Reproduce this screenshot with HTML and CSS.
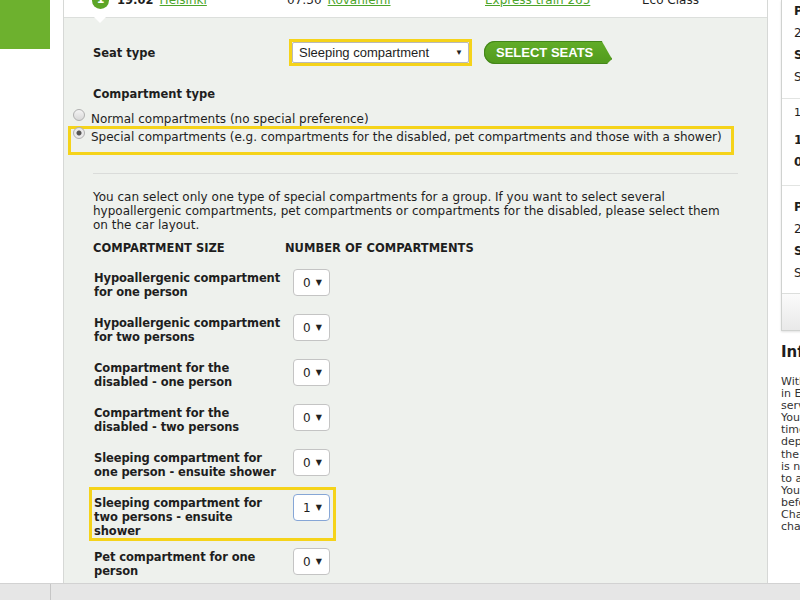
FILE: index.html
```html
<!DOCTYPE html>
<html lang="en">
<head>
    <meta charset="UTF-8">
    <meta name="viewport" content="width=device-width, initial-scale=1.0">
    <title>Seat selection</title>
    <link rel="stylesheet" href="styles.css">
</head>
<body>
<div class="page">
    <div class="content">

        <!-- left strip -->
        <aside class="side-left">
            <div class="brand-block"></div>
        </aside>

        <!-- journey + seat selection -->
        <main class="journey">
            <div class="leg">
                <div class="leg-cell"><span class="leg-num">1</span><b>19:02</b> <a href="#">Helsinki</a></div>
                <div class="leg-cell">07:30 <a href="#">Rovaniemi</a></div>
                <div class="leg-cell"><a href="#">Express train 265</a></div>
                <div class="leg-cell">Eco Class</div>
            </div>

            <div class="seat-panel">
                <div class="seat-row">
                    <div class="seat-label">Seat type</div>
                    <div class="highlight">
                        <div class="select select-wide"><span>Sleeping compartment</span><span class="arrow">&#9660;</span></div>
                    </div>
                    <button class="btn-select">SELECT SEATS</button>
                </div>

                <h3 class="section-title">Compartment type</h3>
                <div class="options">
                    <div class="option"><span class="radio"></span>Normal compartments (no special preference)</div>
                    <div class="option option-selected"><span class="radio radio-checked"></span>Special compartments (e.g. compartments for the disabled, pet compartments and those with a shower)</div>
                </div>

                <div class="divider"></div>

                <p class="note">You can select only one type of special compartments for a group. If you want to select several hypoallergenic compartments, pet compartments or compartments for the disabled, please select them on the car layout.</p>

                <div class="size-head">
                    <span class="size-col">COMPARTMENT SIZE</span>
                    <span>NUMBER OF COMPARTMENTS</span>
                </div>

                <div class="size-list">
                    <div class="size-row">
                        <div class="size-label">Hypoallergenic compartment for one person</div>
                        <div class="select select-num"><span>0</span><span class="arrow">&#9660;</span></div>
                    </div>
                    <div class="size-row">
                        <div class="size-label">Hypoallergenic compartment for two persons</div>
                        <div class="select select-num"><span>0</span><span class="arrow">&#9660;</span></div>
                    </div>
                    <div class="size-row">
                        <div class="size-label">Compartment for the disabled - one person</div>
                        <div class="select select-num"><span>0</span><span class="arrow">&#9660;</span></div>
                    </div>
                    <div class="size-row">
                        <div class="size-label">Compartment for the disabled - two persons</div>
                        <div class="select select-num"><span>0</span><span class="arrow">&#9660;</span></div>
                    </div>
                    <div class="size-row">
                        <div class="size-label">Sleeping compartment for one person - ensuite shower</div>
                        <div class="select select-num"><span>0</span><span class="arrow">&#9660;</span></div>
                    </div>
                    <div class="size-row size-row-active">
                        <div class="size-label">Sleeping compartment for two persons - ensuite shower</div>
                        <div class="select select-num select-focus"><span>1</span><span class="arrow">&#9660;</span></div>
                    </div>
                    <div class="size-row">
                        <div class="size-label">Pet compartment for one person</div>
                        <div class="select select-num"><span>0</span><span class="arrow">&#9660;</span></div>
                    </div>
                </div>
            </div>
        </main>

        <!-- summary column -->
        <aside class="summary">
            <div class="summary-box">
                <div class="summary-section">
                    <div class="s-line s-bold">Passengers</div>
                    <div class="s-line">2 adults</div>
                    <div class="s-line s-bold">Seat type</div>
                    <div class="s-line">Sleeping compartment</div>
                </div>
                <div class="summary-section summary-trip">
                    <div class="s-date">17.10.2014</div>
                    <div class="s-line s-bold">19:02 Helsinki</div>
                    <div class="s-line s-bold">07:30 Rovaniemi</div>
                </div>
                <div class="summary-section summary-last">
                    <div class="s-line s-bold">Passengers</div>
                    <div class="s-line">2 adults</div>
                    <div class="s-line s-bold">Seat type</div>
                    <div class="s-line">Sleeping compartment</div>
                </div>
                <div class="summary-foot"></div>
            </div>

            <h3 class="info-title">Information on tickets</h3>
            <p class="info-text">
                With a Saver ticket you can travel<br>
                in Economy class on all long-distance<br>
                services at a reduced price.<br>
                You can change the departure<br>
                time of your ticket until the<br>
                departure of the train, but<br>
                the price of the new ticket<br>
                is not refunded if it is lower<br>
                to a cheaper one.<br>
                You can cancel the ticket<br>
                before the departure.<br>
                Changes and cancellations are<br>
                charged a service fee.
            </p>
            <h3 class="info-title info-next">For groups</h3>
        </aside>
    </div>

    <div class="statusbar">
        <div class="status-tab"></div>
    </div>
</div>
</body>
</html>
```

FILE: styles.css
```css
* {
    box-sizing: border-box;
}
html, body {
    margin: 0;
    padding: 0;
    height: 100%;
    overflow: hidden;
}
body {
    font-family: "DejaVu Sans", Verdana, sans-serif;
    font-size: 12px;
    line-height: 14px;
    color: #1e1e1e;
    background: #fff;
}
a {
    color: #4ca52b;
}
b {
    font-size: 11.5px;
}
.page {
    display: flex;
    flex-direction: column;
    height: 600px;
}
.content {
    flex: 1;
    display: flex;
    overflow: hidden;
}

/* left strip */
.side-left {
    width: 63px;
    flex-shrink: 0;
}
.brand-block {
    width: 50px;
    height: 49px;
    background: #6db12e;
}

/* journey */
.journey {
    width: 705px;
    flex-shrink: 0;
    display: flex;
    flex-direction: column;
    border-left: 1px solid #d6d8d6;
    border-right: 1px solid #d6d8d6;
}
.leg {
    position: relative;
    flex-shrink: 0;
    margin-top: -17px;
    height: 35px;
    padding-left: 28px;
    display: grid;
    grid-template-columns: 195px 198px 157px auto;
    align-items: center;
    background: #fff;
    border-bottom: 1px solid #dcdfdc;
}
.leg::after {
    content: "";
    position: absolute;
    left: 30px;
    top: 100%;
    border-left: 6px solid transparent;
    border-right: 6px solid transparent;
    border-top: 6px solid #fff;
}
.leg-cell {
    display: flex;
    align-items: center;
    gap: 6px;
}
.leg-num {
    width: 17px;
    height: 17px;
    border-radius: 50%;
    background: #5ca526;
    color: #fff;
    font-weight: bold;
    font-size: 11px;
    display: flex;
    align-items: center;
    justify-content: center;
    margin-right: 2px;
}

/* seat panel */
.seat-panel {
    flex: 1;
    background: #eef1ed;
    padding: 21px 28px 0 29px;
}
.seat-row {
    display: flex;
    align-items: center;
}
.seat-label {
    width: 196px;
    font-weight: bold;
    font-size: 11.5px;
}
.highlight {
    border: 3px solid #f5d31a;
}
.select {
    background: #fff;
    border: 1px solid #b9b9b9;
    display: flex;
    align-items: center;
    justify-content: space-between;
}
.select .arrow {
    font-size: 8px;
    color: #222;
}
.select-wide {
    width: 177px;
    height: 21px;
    padding: 0 5px 0 6px;
    border-radius: 2px;
    font-family: "Liberation Sans", Arial, sans-serif;
    font-size: 13px;
}
.btn-select {
    margin-left: 12px;
    width: 128px;
    height: 23px;
    border: none;
    border-radius: 11px 0 0 11px;
    background: linear-gradient(#62ad28, #519a1d);
    box-shadow: inset 0 0 0 1px #44861a;
    color: #fff;
    font-family: "Liberation Sans", Arial, sans-serif;
    font-weight: bold;
    font-size: 13px;
    text-align: left;
    padding: 0 0 0 12px;
    clip-path: polygon(0 0, 92% 0, 100% 78%, 96% 100%, 0 100%);
    cursor: pointer;
}
.section-title {
    margin: 21px 0 11px 0;
    font-size: 11.5px;
    line-height: 14px;
}
.options {
    margin-left: -25px;
}
.option {
    display: flex;
    align-items: flex-start;
    padding: 0 5px;
}
.option-selected {
    border: 3px solid #f5d31a;
    padding: 1px 2px 8px 2px;
    margin-right: 5px;
}
.radio {
    width: 12px;
    height: 12px;
    margin: -3px 6px 0 0;
    border: 1px solid #b0b0b0;
    border-radius: 50%;
    background: linear-gradient(#f4f4f4, #d8d8d8);
    flex-shrink: 0;
}
.radio-checked {
    background: radial-gradient(circle, #555 0 2px, #e9e9e9 3px);
}
.divider {
    margin-top: 18px;
    width: 645px;
    border-top: 1px solid #dadcda;
}
.note {
    margin: 16px 0 0 0;
    width: 645px;
}
.size-head {
    display: flex;
    margin-top: 9px;
    font-weight: bold;
    font-size: 11.5px;
}
.size-col {
    width: 192px;
}
.size-list {
    margin: 7px 0 0 -4px;
}
.size-row {
    display: flex;
    align-items: flex-start;
    width: 247px;
    padding: 4px 3px 0 2px;
    margin-bottom: 5px;
    border: 3px solid transparent;
}
.size-row-active {
    border-color: #f5d31a;
    margin-bottom: 0;
}
.size-label {
    width: 187px;
    margin: 2px 12px 0 0;
    font-weight: bold;
    font-size: 11.5px;
    letter-spacing: -0.1px;
}
.select-num {
    width: 37px;
    height: 27px;
    padding: 0 7px 0 9px;
    border-color: #c4c4c4;
    border-radius: 4px;
}
.select-focus {
    border-color: #86a6d6;
}

/* summary column */
.summary {
    width: 190px;
    flex-shrink: 0;
    margin-left: 13px;
}
.summary-box {
    background: #fff;
    border: 1px solid #d0d2d0;
    border-top: none;
    box-shadow: 0 1px 2px rgba(0, 0, 0, 0.12);
}
.summary-section {
    padding: 0 12px 10px 12px;
    border-bottom: 1px solid #e2e4e2;
}
.s-line {
    line-height: 22px;
    white-space: nowrap;
}
.s-bold {
    font-weight: bold;
}
.summary-trip {
    padding-top: 6px;
    padding-bottom: 12px;
}
.s-date {
    font-size: 11px;
    line-height: 16px;
    margin-bottom: 8px;
}
.summary-last {
    padding-top: 10px;
    padding-bottom: 9px;
    border-bottom: 1px solid #dcdedc;
}
.summary-foot {
    height: 36px;
    background: linear-gradient(#fbfbfb, #e9e9e9);
}
.info-title {
    margin: 14px 0 0 0;
    font-size: 15px;
    line-height: 15px;
}
.info-text {
    margin: 16px 0 0 0;
    font-size: 11px;
    line-height: 12.1px;
    color: #333;
    white-space: nowrap;
}
.info-next {
    margin-top: 57px;
}

/* bottom bar */
.statusbar {
    height: 17px;
    flex-shrink: 0;
    background: #e6e6e6;
    border-top: 1px solid #d2d2d2;
}
.status-tab {
    width: 51px;
    height: 100%;
    border-right: 1px solid #c6c6c6;
}
```
